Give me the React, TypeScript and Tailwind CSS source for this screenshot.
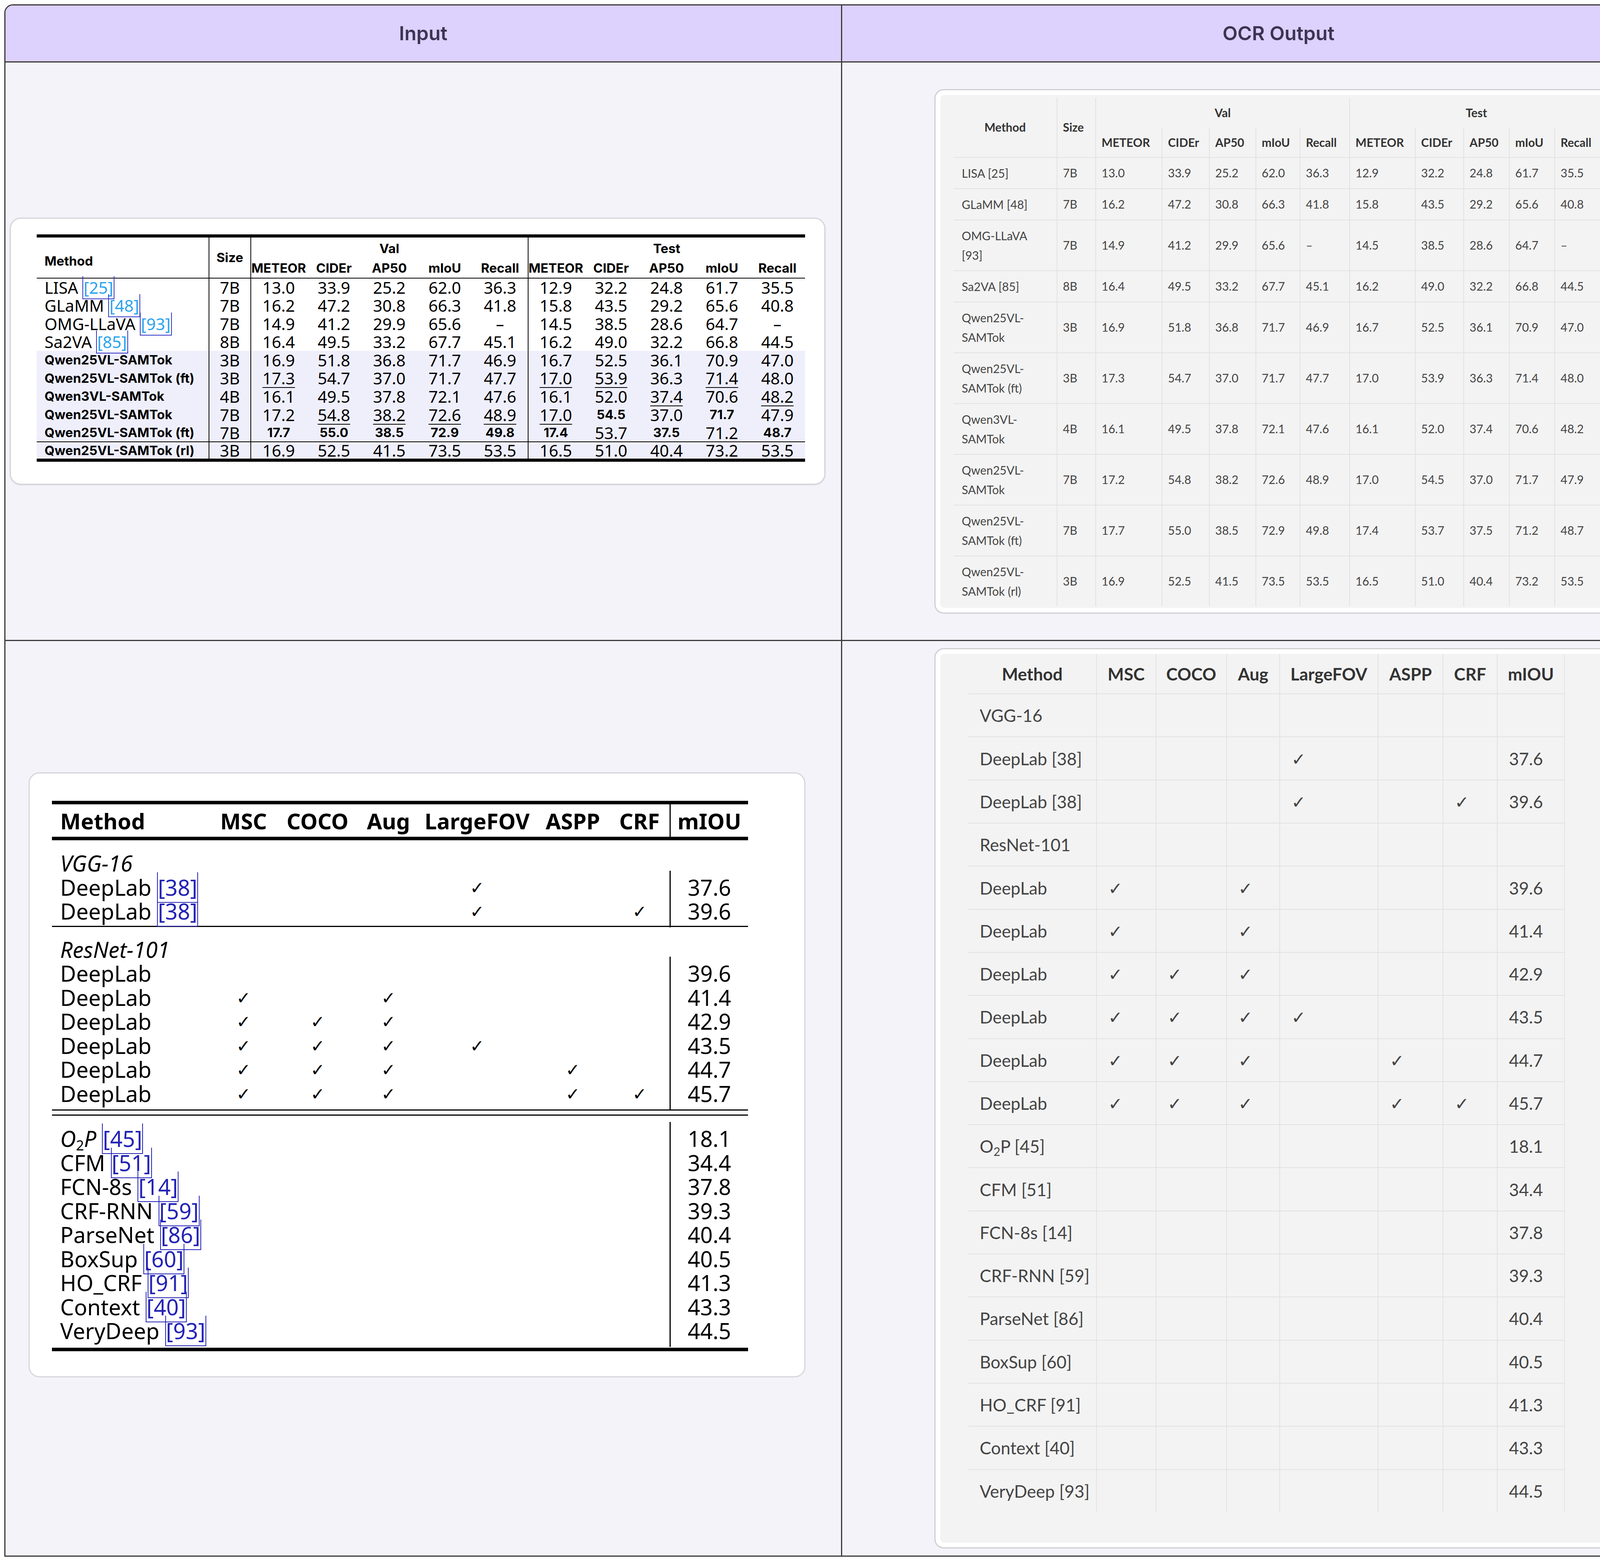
import React from "react";

type Cell = { v: string; b?: boolean; u?: boolean };
const P = (s: string): Cell[] =>
  s.split(" ").map((t) => {
    if (t.startsWith("*")) return { v: t.slice(1), b: true };
    if (t.startsWith("_")) return { v: t.slice(1), u: true };
    return { v: t };
  });

const topRows: { m: string; r?: string; q?: boolean; size: string; vals: Cell[]; tr: string[] }[] = [
  { m: "LISA", r: "25", size: "7B", vals: P("13.0 33.9 25.2 62.0 36.3 12.9 32.2 24.8 61.7 35.5"), tr: ["LISA [25]"] },
  { m: "GLaMM", r: "48", size: "7B", vals: P("16.2 47.2 30.8 66.3 41.8 15.8 43.5 29.2 65.6 40.8"), tr: ["GLaMM [48]"] },
  { m: "OMG-LLaVA", r: "93", size: "7B", vals: P("14.9 41.2 29.9 65.6 – 14.5 38.5 28.6 64.7 –"), tr: ["OMG-LLaVA", "[93]"] },
  { m: "Sa2VA", r: "85", size: "8B", vals: P("16.4 49.5 33.2 67.7 45.1 16.2 49.0 32.2 66.8 44.5"), tr: ["Sa2VA [85]"] },
  { m: "Qwen25VL-SAMTok", q: true, size: "3B", vals: P("16.9 51.8 36.8 71.7 46.9 16.7 52.5 36.1 70.9 47.0"), tr: ["Qwen25VL-", "SAMTok"] },
  { m: "Qwen25VL-SAMTok (ft)", q: true, size: "3B", vals: P("_17.3 54.7 37.0 71.7 47.7 _17.0 _53.9 36.3 _71.4 48.0"), tr: ["Qwen25VL-", "SAMTok (ft)"] },
  { m: "Qwen3VL-SAMTok", q: true, size: "4B", vals: P("16.1 49.5 37.8 72.1 47.6 16.1 52.0 _37.4 70.6 _48.2"), tr: ["Qwen3VL-", "SAMTok"] },
  { m: "Qwen25VL-SAMTok", q: true, size: "7B", vals: P("17.2 _54.8 _38.2 _72.6 _48.9 _17.0 *54.5 37.0 *71.7 47.9"), tr: ["Qwen25VL-", "SAMTok"] },
  { m: "Qwen25VL-SAMTok (ft)", q: true, size: "7B", vals: P("*17.7 *55.0 *38.5 *72.9 *49.8 *17.4 53.7 *37.5 71.2 *48.7"), tr: ["Qwen25VL-", "SAMTok (ft)"] },
  { m: "Qwen25VL-SAMTok (rl)", q: true, size: "3B", vals: P("16.9 52.5 41.5 73.5 53.5 16.5 51.0 40.4 73.2 53.5"), tr: ["Qwen25VL-", "SAMTok (rl)"] },
];
const metrics = ["METEOR", "CIDEr", "AP50", "mIoU", "Recall"];

const SANS = "font-[Inter]";
const SERIF = "font-['Liberation_Serif']";
const LATO = "font-[Lato]";

function TopLeft() {
  return (
    <div className="w-[2088px] bg-white rounded-[28px] border-[3px] border-[#d6d6dc] pl-[66px] pt-[40px] pb-[56px] shadow-sm">
      <table className="w-[1967px] table-fixed border-collapse text-black">
        <colgroup>
          <col className="w-[441px]" />
          <col className="w-[107px]" />
          {Array.from({ length: 10 }).map((_, i) => (
            <col key={i} className="w-[141.9px]" />
          ))}
        </colgroup>
        <thead className={`${SANS} font-bold text-[33px]`}>
          <tr className="border-t-[8px] border-black h-[58px]">
            <th rowSpan={2} className="text-left pl-[20px] pt-[18px] font-bold align-middle">Method</th>
            <th rowSpan={2} className="border-l-2 border-black font-bold">Size</th>
            <th colSpan={5} className="border-l-2 border-black font-bold align-bottom">Val</th>
            <th colSpan={5} className="border-l-2 border-black font-bold align-bottom">Test</th>
          </tr>
          <tr className="h-[50px] border-b-2 border-black">
            {metrics.map((m, i) => (
              <th key={"v" + m} className={`font-bold ${i === 0 ? "border-l-2 border-black" : ""}`}>{m}</th>
            ))}
            {metrics.map((m, i) => (
              <th key={"t" + m} className={`font-bold ${i === 0 ? "border-l-2 border-black" : ""}`}>{m}</th>
            ))}
          </tr>
        </thead>
        <tbody className="border-b-[8px] border-black">
          {topRows.map((r, ri) => (
            <tr key={ri} className={`h-[46.6px] ${r.q ? "bg-[#efeffc]" : ""} ${ri === 9 ? "border-t-2 border-black" : ""}`}>
              <td className="pl-[20px] whitespace-nowrap leading-none">
                {r.q ? (
                  <span className={`${SANS} font-bold text-[33px]`}>{r.m}</span>
                ) : (
                  <span className={`${SERIF} text-[42px] leading-none`}>
                    {r.m}{" "}
                    <span className="text-[#2aa3ee] border-x-2 border-b-2 border-[#3434c8] px-[1px]">[{r.r}]</span>
                  </span>
                )}
              </td>
              <td className={`${SERIF} text-[42px] text-center border-l-2 border-black leading-none`}>{r.size}</td>
              {r.vals.map((c, ci) => (
                <td key={ci} className={`text-center leading-none ${ci === 0 || ci === 5 ? "border-l-2 border-black" : ""}`}>
                  <span
                    className={`${c.b ? `${SANS} font-bold text-[33px]` : `${SERIF} text-[42px]`} ${c.u ? "underline decoration-2 underline-offset-[7px]" : ""}`}
                  >
                    {c.v}
                  </span>
                </td>
              ))}
            </tr>
          ))}
        </tbody>
      </table>
    </div>
  );
}

function TopRight() {
  const widths = ["w-[265px]", "w-[99px]", "w-[170px]", "w-[121px]", "w-[119px]", "w-[113px]", "w-[127px]", "w-[168px]", "w-[124px]", "w-[117px]", "w-[116px]", "w-[124px]"];
  const bd = "border-x-2 border-[#e2e2e2]";
  return (
    <div className="w-[1796px] bg-white rounded-[24px] border-[3px] border-[#cfcfd4] p-[12px]">
      <div className="bg-[#f3f3f3] rounded-[10px] pl-[34px] pt-[7px] pb-[4px]">
        <table className={`w-[1663px] table-fixed border-collapse ${LATO} text-[30px] text-[#444]`}>
          <colgroup>
            {widths.map((w, i) => (
              <col key={i} className={w} />
            ))}
          </colgroup>
          <thead className="text-[#333]">
            <tr className="h-[77px]">
              <th rowSpan={2} className="font-bold text-center border-r-2 border-[#e2e2e2]">Method</th>
              <th rowSpan={2} className={`font-bold text-left pl-[14px] ${bd}`}>Size</th>
              <th colSpan={5} className={`font-bold text-center ${bd}`}>Val</th>
              <th colSpan={5} className={`font-bold text-center ${bd}`}>Test</th>
            </tr>
            <tr className="h-[76px] border-b-2 border-[#e2e2e2]">
              {[...metrics, ...metrics].map((m, i) => (
                <th key={i} className={`font-bold text-left pl-[14px] ${bd}`}>{m}</th>
              ))}
            </tr>
          </thead>
          <tbody>
            {topRows.map((r, ri) => (
              <tr key={ri} className={ri < 9 ? "border-b-2 border-[#e2e2e2]" : ""}>
                <td className="pl-[21px] py-[14px] leading-[50px] whitespace-nowrap border-r-2 border-[#e2e2e2]">
                  {r.tr.map((l, li) => (
                    <div key={li}>{l}</div>
                  ))}
                </td>
                <td className={`pl-[14px] ${bd}`}>{r.size}</td>
                {r.vals.map((c, ci) => (
                  <td key={ci} className={`pl-[14px] ${bd}`}>{c.v}</td>
                ))}
              </tr>
            ))}
          </tbody>
        </table>
      </div>
    </div>
  );
}

type BRow = { kind: "label" | "row"; name: React.ReactNode; plain: string; checks: number[]; v?: string };
const Ref = ({ n }: { n: string }) => (
  <span className="text-[#2323b5] border-x-2 border-b-2 border-[#2323b5] leading-none">[{n}]</span>
);
const R = (n: string, ref: string | undefined, checks: number[], v: string): BRow => ({
  kind: "row",
  name: (
    <>
      {n}
      {ref ? (
        <>
          {" "}
          <Ref n={ref} />
        </>
      ) : null}
    </>
  ),
  plain: ref ? `${n} [${ref}]` : n,
  checks,
  v,
});
const g1: BRow[] = [
  { kind: "label", name: "VGG-16", plain: "VGG-16", checks: [] },
  R("DeepLab", "38", [3], "37.6"),
  R("DeepLab", "38", [3, 5], "39.6"),
];
const g2: BRow[] = [
  { kind: "label", name: "ResNet-101", plain: "ResNet-101", checks: [] },
  R("DeepLab", undefined, [], "39.6"),
  R("DeepLab", undefined, [0, 2], "41.4"),
  R("DeepLab", undefined, [0, 1, 2], "42.9"),
  R("DeepLab", undefined, [0, 1, 2, 3], "43.5"),
  R("DeepLab", undefined, [0, 1, 2, 4], "44.7"),
  R("DeepLab", undefined, [0, 1, 2, 4, 5], "45.7"),
];
const g3: BRow[] = [
  {
    kind: "row",
    name: (
      <>
        <i>
          O<sub className="text-[36px] not-italic">2</sub>P
        </i>{" "}
        <Ref n="45" />
      </>
    ),
    plain: "O2P [45]",
    checks: [],
    v: "18.1",
  },
  R("CFM", "51", [], "34.4"),
  R("FCN-8s", "14", [], "37.8"),
  R("CRF-RNN", "59", [], "39.3"),
  R("ParseNet", "86", [], "40.4"),
  R("BoxSup", "60", [], "40.5"),
  R("HO_CRF", "91", [], "41.3"),
  R("Context", "40", [], "43.3"),
  R("VeryDeep", "93", [], "44.5"),
];
// MSC(0) etc; note ResNet DeepLab row 1 in reference OCR shows checks [0,2] at 39.6 — keep input as-is
const bCols = ["MSC", "COCO", "Aug", "LargeFOV", "ASPP", "CRF"];
const bGrid = "grid grid-cols-[407px_167px_212px_151px_303px_187px_154px_201px]";

function BLRows({ rows }: { rows: BRow[] }) {
  return (
    <>
      {rows.map((r, i) => (
        <div key={i} className={`${bGrid} h-[61.5px] items-center`}>
          <div className={`pl-[21px] whitespace-nowrap ${r.kind === "label" ? "italic" : ""}`}>{r.name}</div>
          {bCols.map((_, ci) => (
            <div key={ci} className="text-center font-['DejaVu_Serif'] text-[44px]">{r.checks.includes(ci) ? "✓" : ""}</div>
          ))}
          <div className={`h-full flex items-center justify-center ${r.kind === "row" ? "border-l-[3px] border-black" : ""}`}>{r.v ?? ""}</div>
        </div>
      ))}
    </>
  );
}

function BottomLeft() {
  return (
    <div className="w-[1989px] bg-white rounded-[28px] border-[3px] border-[#d6d6dc] pl-[57px] pt-[70px] pb-[64px]">
      <div className={`w-[1782px] ${SERIF} text-[56px] text-black`}>
        <div className="border-t-[9px] border-b-[9px] border-black">
          <div className={`${bGrid} h-[83px] items-center font-bold`}>
            <div className="pl-[21px]">Method</div>
            {bCols.map((c) => (
              <div key={c} className="text-center">{c}</div>
            ))}
            <div className="h-full flex items-center justify-center border-l-[3px] border-black">mIOU</div>
          </div>
        </div>
        <div className="pt-[16px] pb-[18px] border-b-[3px] border-black">
          <BLRows rows={g1} />
        </div>
        <div className="pt-[15px] pb-[22px] border-b-[3px] border-black">
          <BLRows rows={g2} />
        </div>
        <div className="h-[13px] border-b-[3px] border-black" />
        <div className="pt-[16px] pb-[24px] border-b-[9px] border-black">
          <BLRows rows={g3} />
        </div>
      </div>
    </div>
  );
}

const brChecks: Record<number, number[]> = { 4: [0, 2] };

function BottomRight() {
  const widths = ["w-[328px]", "w-[152px]", "w-[181px]", "w-[136px]", "w-[252px]", "w-[166px]", "w-[139px]", "w-[172px]"];
  const all = [...g1, ...g2, ...g3];
  const bd = "border-x-2 border-[#e2e2e2]";
  return (
    <div className="w-[1796px] bg-white rounded-[24px] border-[3px] border-[#cfcfd4] p-[12px]">
      <div className="bg-[#f3f3f3] rounded-[10px] pl-[72px] pb-[77px]">
        <table className={`w-[1526px] table-fixed border-collapse ${LATO} text-[44px] text-[#444]`}>
          <colgroup>
            {widths.map((w, i) => (
              <col key={i} className={w} />
            ))}
          </colgroup>
          <thead className="text-[#333]">
            <tr className="h-[102px] border-b-2 border-[#e2e2e2]">
              <th className="font-bold text-center border-r-2 border-[#e2e2e2]">Method</th>
              {[...bCols, "mIOU"].map((c) => (
                <th key={c} className={`font-bold text-center ${bd}`}>{c}</th>
              ))}
            </tr>
          </thead>
          <tbody>
            {all.map((r, i) => {
              const checks = brChecks[i] ?? r.checks;
              return (
                <tr key={i} className={`h-[110.3px] ${i < all.length - 1 ? "border-b-2 border-[#e2e2e2]" : ""}`}>
                  <td className="pl-[29px] whitespace-nowrap border-r-2 border-[#e2e2e2]">
                    {r.plain === "O2P [45]" ? (
                      <>
                        O<sub className="text-[30px]">2</sub>P [45]
                      </>
                    ) : (
                      r.plain
                    )}
                  </td>
                  {bCols.map((_, ci) => (
                    <td key={ci} className={`pl-[29px] ${bd}`}>{checks.includes(ci) ? "✓" : ""}</td>
                  ))}
                  <td className={`pl-[29px] ${bd}`}>{r.v ?? ""}</td>
                </tr>
              );
            })}
          </tbody>
        </table>
      </div>
    </div>
  );
}

export default function App() {
  return (
    <div className="w-[4404px] h-[3996px] bg-white p-[11px] overflow-hidden">
      <div className="h-[3974px] border-[3px] border-[#3a3a3a] rounded-t-[22px] overflow-hidden grid grid-cols-[2142px_minmax(0,1fr)] grid-rows-[146px_1481px_minmax(0,1fr)] bg-[#f4f3f9]">
        <div className={`bg-[#ddd1fd] border-b-[3px] border-r-[3px] border-[#3a3a3a] flex items-center justify-center ${SANS} font-semibold text-[50px] text-[#3b3452]`}>Input</div>
        <div className={`bg-[#ddd1fd] border-b-[3px] border-[#3a3a3a] flex items-center justify-center ${SANS} font-semibold text-[50px] text-[#3b3452]`}>OCR Output</div>
        <div className="border-r-[3px] border-b-[3px] border-[#3a3a3a] flex items-center justify-start pl-[11px]">
          <TopLeft />
        </div>
        <div className="border-b-[3px] border-[#3a3a3a] flex items-center justify-start pl-[236px]">
          <TopRight />
        </div>
        <div className="border-r-[3px] border-[#3a3a3a] flex items-center justify-start pl-[59px] pb-[120px]">
          <BottomLeft />
        </div>
        <div className="flex items-center justify-start pl-[236px]">
          <BottomRight />
        </div>
      </div>
    </div>
  );
}
